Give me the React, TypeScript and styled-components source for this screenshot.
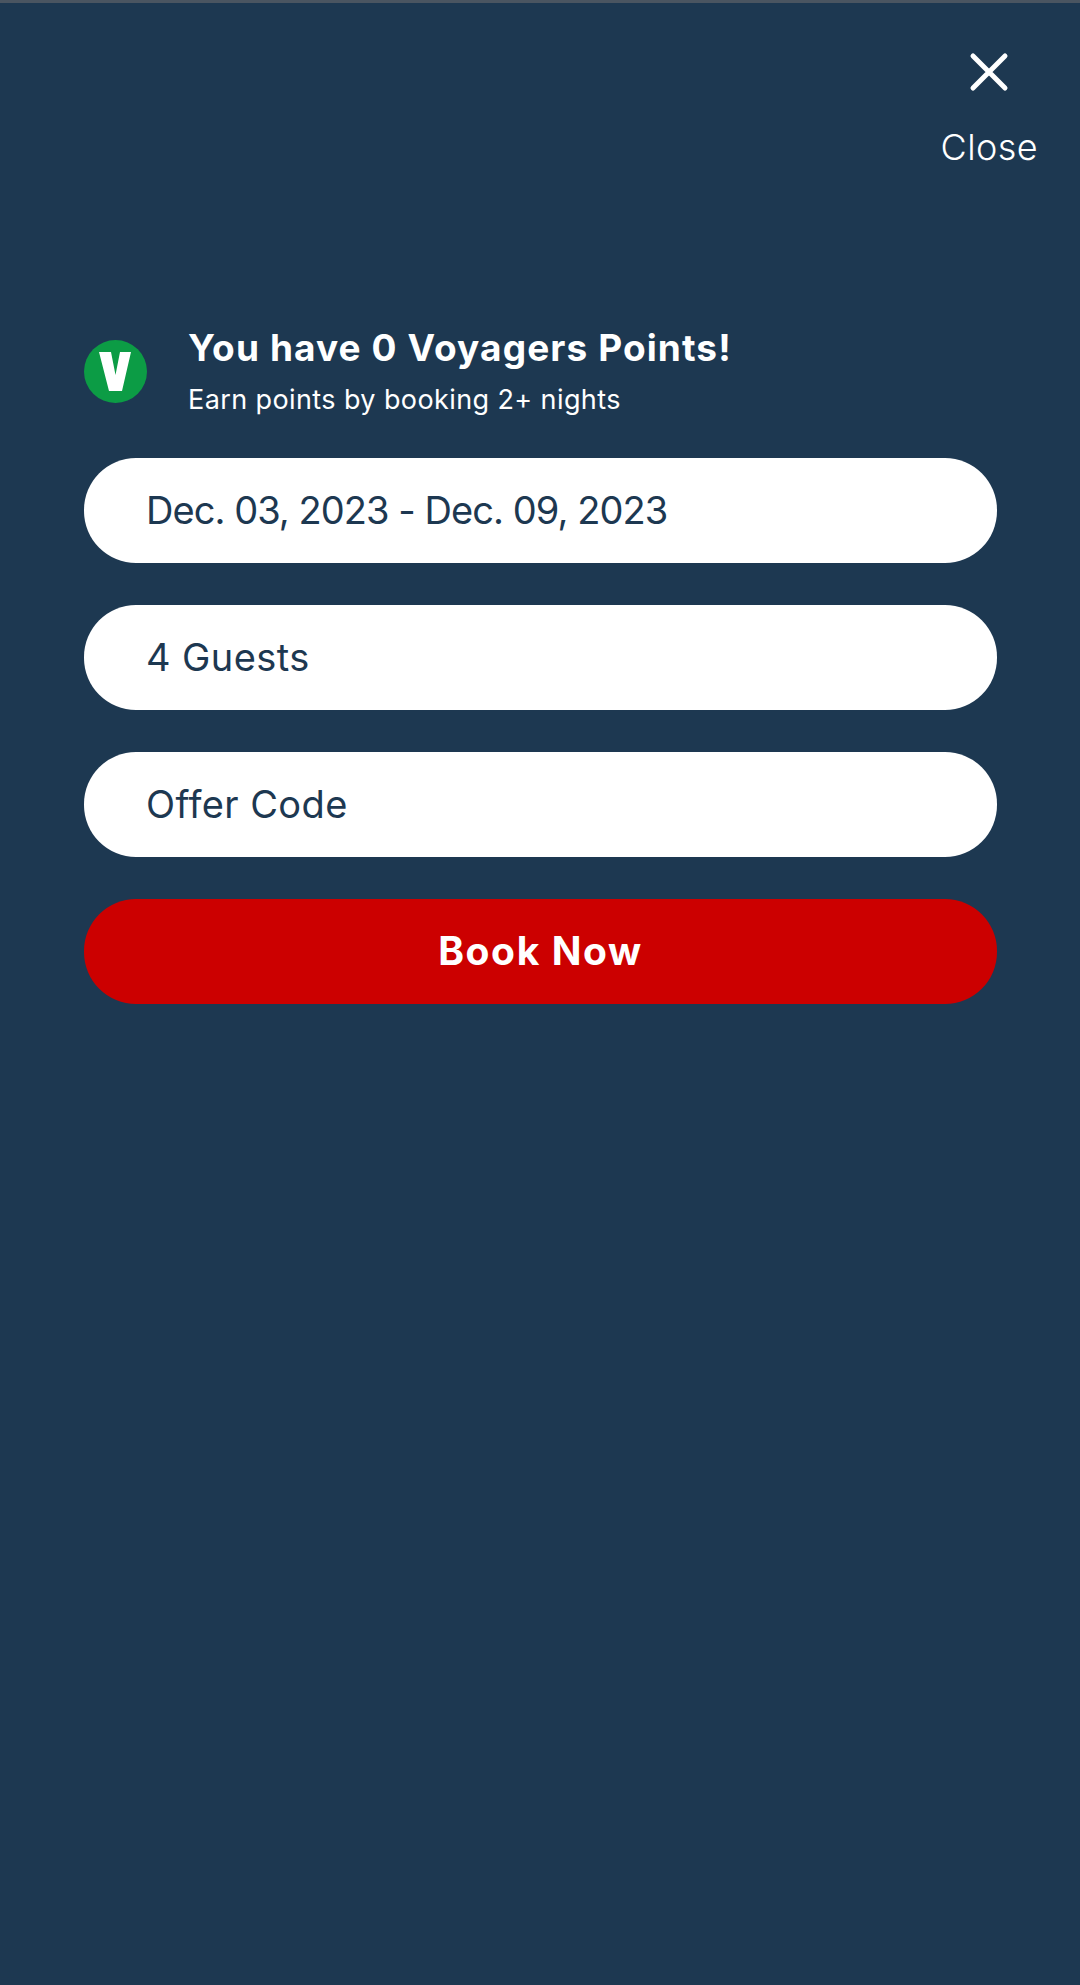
import React from "react"
import styled, { createGlobalStyle } from "styled-components"

const GlobalStyle = createGlobalStyle`
  html, body {
    margin: 0;
    padding: 0;
    background: #1d3851;
  }
  * {
    box-sizing: border-box;
  }
`

const Page = styled.div`
  width: 1080px;
  height: 1985px;
  background: #1d3851;
  border-top: 3px solid #4a5561;
  font-family: Inter, "Open Sans", sans-serif;
  color: #fff;
  overflow: hidden;
`

const TopBar = styled.header`
  display: flex;
  justify-content: flex-end;
  height: 324px;
  padding: 49px 42px 0 0;
`

const CloseButton = styled.button`
  display: flex;
  flex-direction: column;
  align-items: center;
  gap: 34px;
  height: 116px;
  padding: 0;
  border: 0;
  background: none;
  color: #fff;
  font-family: inherit;
  font-size: 36px;
  font-weight: 300;
  line-height: 42px;
  letter-spacing: 0.4px;
`

const Content = styled.main`
  display: flex;
  flex-direction: column;
  gap: 42px;
  padding: 0 83px 0 84px;
`

const Points = styled.section`
  display: flex;
  align-items: center;
  gap: 41px;
  height: 89px;
`

const Badge = styled.svg`
  flex: none;
  width: 63px;
  height: 63px;
`

const PointsText = styled.div`
  display: flex;
  flex-direction: column;
  gap: 15px;
`

const Title = styled.h1`
  margin: 0;
  font-size: 37px;
  font-weight: 700;
  line-height: 42px;
  letter-spacing: 1.1px;
`

const Subtitle = styled.p`
  margin: 0;
  font-size: 27px;
  font-weight: 400;
  line-height: 32px;
  letter-spacing: 0.4px;
`

const Pill = styled.div<{ $primary?: boolean; $tight?: boolean }>`
  display: flex;
  align-items: center;
  justify-content: ${props => (props.$primary ? "center" : "flex-start")};
  height: 105px;
  padding: 0 62px 2px;
  border-radius: 52px;
  background: ${props => (props.$primary ? "#cc0000" : "#fff")};
  color: ${props => (props.$primary ? "#fff" : "#1d3851")};
  font-size: ${props => (props.$primary ? "39px" : "38px")};
  font-weight: ${props => (props.$primary ? 700 : 400)};
  letter-spacing: ${props => (props.$tight ? "-0.95px" : props.$primary ? "1.6px" : "0.4px")};
`

const App = () => (
  <Page>
    <GlobalStyle />
    <TopBar>
      <CloseButton>
        <svg width="40" height="40" viewBox="0 0 40 40" fill="none">
          <path d="M4 4 L36 36 M36 4 L4 36" stroke="#fff" strokeWidth="5" strokeLinecap="round" />
        </svg>
        Close
      </CloseButton>
    </TopBar>
    <Content>
      <Points>
        <Badge viewBox="0 0 63 63">
          <circle cx="31.5" cy="31.5" r="31.5" fill="#0c9c45" />
          <path d="M15 12 H27 L31.5 35 L36 12 H47 L38 51 H25 Z" fill="#fff" />
        </Badge>
        <PointsText>
          <Title>You have 0 Voyagers Points!</Title>
          <Subtitle>Earn points by booking 2+ nights</Subtitle>
        </PointsText>
      </Points>
      <Pill $tight>Dec. 03, 2023 - Dec. 09, 2023</Pill>
      <Pill>4 Guests</Pill>
      <Pill>Offer Code</Pill>
      <Pill $primary>Book Now</Pill>
    </Content>
  </Page>
)

export default App
